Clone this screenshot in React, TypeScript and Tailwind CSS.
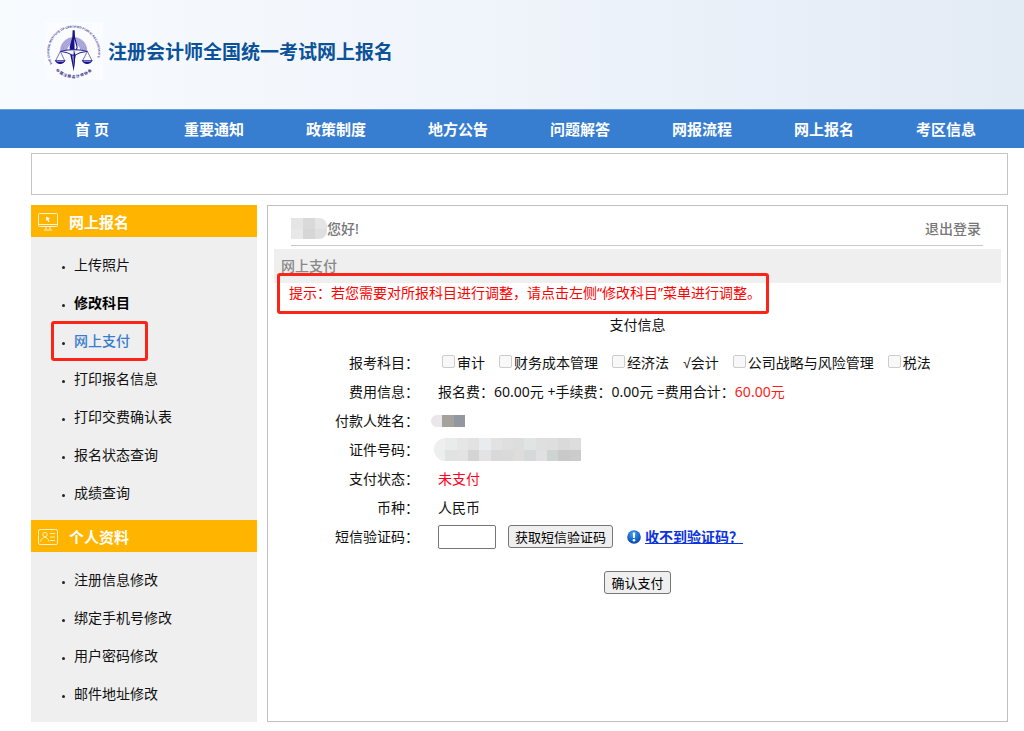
import React from "react";

const navItems = ["首 页", "重要通知", "政策制度", "地方公告", "问题解答", "网报流程", "网上报名", "考区信息"];

type MenuItem = { label: string; bold?: boolean; active?: boolean };

const registrationMenu: MenuItem[] = [
  { label: "上传照片" },
  { label: "修改科目", bold: true },
  { label: "网上支付", active: true },
  { label: "打印报名信息" },
  { label: "打印交费确认表" },
  { label: "报名状态查询" },
  { label: "成绩查询" },
];

const profileMenu: MenuItem[] = [
  { label: "注册信息修改" },
  { label: "绑定手机号修改" },
  { label: "用户密码修改" },
  { label: "邮件地址修改" },
];

const subjects = [
  { name: "审计", chosen: false },
  { name: "财务成本管理", chosen: false },
  { name: "经济法", chosen: false },
  { name: "会计", chosen: true },
  { name: "公司战略与风险管理", chosen: false },
  { name: "税法", chosen: false },
];

const idBlocks = [
  "bg-[#efefef]", "bg-[#eaecec]", "bg-[#e6e6e6]", "bg-[#e3e2e3]", "bg-[#e9ecee]", "bg-[#e2e2e3]", "bg-[#dfdfe0]",
  "bg-[#dddddd]", "bg-[#e0e4e3]", "bg-[#dfdfdf]", "bg-[#dedede]", "bg-[#dbdadb]", "bg-[#dddddd]",
  "bg-[#eeeeee]", "bg-[#dfe3e2]", "bg-[#e3e3e3]", "bg-[#d4d4d5]", "bg-[#e3e3e3]", "bg-[#d9d9da]", "bg-[#dadada]",
  "bg-[#dfdddc]", "bg-[#d5d9da]", "bg-[#e0e0e0]", "bg-[#cfd3d2]", "bg-[#c9c9ca]", "bg-[#cbcbcb]",
];

function Logo() {
  return (
    <svg viewBox="0 0 174 174" className="size-[58px] bg-[#fbfcff]" fill="none" aria-hidden="true">
      <defs>
        <path id="ring-top" d="M22.5 126 A73 73 0 1 1 149.5 126" />
        <path id="ring-bottom" d="M22 134 A78 78 0 0 0 150 134" />
      </defs>
      <text fill="#3b3494" fontFamily="Liberation Sans, sans-serif" fontSize="9" fontWeight="700">
        <textPath href="#ring-top">THE CHINESE INSTITUTE OF CERTIFIED PUBLIC ACCOUNTANTS</textPath>
      </text>
      <text fill="#2b2488" fontFamily="Noto Sans CJK SC, sans-serif" fontSize="11" fontWeight="700" textAnchor="middle">
        <textPath href="#ring-bottom" startOffset="50%">中 国 注 册 会 计 师 协 会</textPath>
      </text>
      <path d="M45 86 A41 41 0 0 1 127 86 H106 A20 20 0 0 0 66 86 Z" fill="#b9b5df" />
      <g stroke="#827cc4" strokeWidth="1.5">
        <path d="M49 86 A37 37 0 0 1 123 86" />
        <path d="M54 86 A32 32 0 0 1 118 86" />
        <path d="M59 86 A27 27 0 0 1 113 86" />
        <path d="M64 86 A22 22 0 0 1 108 86" />
      </g>
      <path d="M83 25 H89 L90 44 L98 76 L92 97 L86 148 L76 98 L74 76 L82 44 Z" fill="#17128a" />
      <path d="M88 50 L95 76 L89 92 Z M82 100 L86 100 L86 133 Z" fill="#f4f5ff" />
      <path d="M46 88 Q86 78 127 88 Q101 91 91 99 H81 Q70 91 46 88 Z" fill="#f4f5ff" stroke="#2b258f" strokeWidth="3" />
      <path d="M86 80 L91 98 L86 148 Z" fill="#17128a" />
      <path d="M46 88 L32 116 M46 88 L59 116 M127 88 L113 116 M127 88 L141 116" stroke="#332d93" strokeWidth="2" />
      <path d="M29 115 H62 Q57 126 45 126 Q34 126 29 115 Z M110 115 H143 Q138 126 126 126 Q115 126 110 115 Z" fill="#17128a" />
      <path d="M35 118 H56 M116 118 H137" stroke="#d4d2ee" strokeWidth="2" />
    </svg>
  );
}

function MonitorIcon() {
  return (
    <svg viewBox="0 0 20 18" className="h-[18px] w-5" fill="none" stroke="#fff4cf" aria-hidden="true">
      <rect x="0.5" y="0.5" width="19" height="13" rx="1" />
      <path d="M1 11.5 H19 M8 14 V16.5 M12 14 V16.5 M6 17 H14" />
      <path d="M8 3.5 L12 5.5 L10.5 6.2 L11.5 8.5 L10.3 9 L9.4 7 L8.3 8 Z" fill="#fff" stroke="none" />
    </svg>
  );
}

function IdCardIcon() {
  return (
    <svg viewBox="0 0 20 16" className="h-4 w-5" fill="none" stroke="#fff0bd" aria-hidden="true">
      <rect x="0.5" y="0.5" width="19" height="15" rx="1.5" />
      <circle cx="7" cy="5.5" r="2.2" />
      <path d="M2.5 12.5 C3.5 9.5 5 8.5 7 8.5 S10 9.5 11 12.5 M12 4.5 H17 M12 8 H17 M12 11.5 H17" />
    </svg>
  );
}

function NoticeIcon() {
  return (
    <svg viewBox="0 0 14 14" className="size-[14px]" aria-hidden="true">
      <defs>
        <radialGradient id="notice" cx="0.45" cy="0.3" r="0.75">
          <stop offset="0" stopColor="#4aa0f4" />
          <stop offset="0.6" stopColor="#1565cf" />
          <stop offset="1" stopColor="#0a3e94" />
        </radialGradient>
      </defs>
      <circle cx="7" cy="7" r="6.8" fill="url(#notice)" />
      <path d="M5.8 2.5 H8.2 L7.9 8 H6.1 Z" fill="#fff" />
      <circle cx="7" cy="10.2" r="1.3" fill="#fff" />
    </svg>
  );
}

function MenuSection({ title, icon, items }: { title: string; icon: React.ReactNode; items: MenuItem[] }) {
  return (
    <section>
      <h2 className="flex h-8 items-center gap-[11px] bg-[#ffb400] pt-px pl-[7px] text-[15px] font-bold text-white">
        {icon}
        {title}
      </h2>
      <ul className="pt-[9px] pb-2">
        {items.map((item) => (
          <li key={item.label} className="relative flex h-[38px] items-center gap-[9px] pl-[31px]">
            <span className="mt-1 size-[3px] rounded-full bg-[#222]" />
            <a
              href="#"
              className={item.bold ? "font-bold text-black" : item.active ? "font-medium text-[#377dd0]" : "text-[#111]"}
            >
              {item.label}
            </a>
            {item.active && (
              <span className="pointer-events-none absolute -inset-y-px left-5 w-[97px] rounded-[3px] border-[3px] border-[#fb2418]" />
            )}
          </li>
        ))}
      </ul>
    </section>
  );
}

function Row({ label, htmlFor, children }: { label: string; htmlFor?: string; children: React.ReactNode }) {
  return (
    <div className="grid min-h-[29px] grid-cols-[151px_1fr] items-center gap-3">
      {htmlFor ? (
        <label htmlFor={htmlFor} className="text-right">{label}：</label>
      ) : (
        <span className="text-right">{label}：</span>
      )}
      <div className="flex items-center">{children}</div>
    </div>
  );
}

export default function App() {
  return (
    <div className="min-h-screen bg-white pb-[9px] font-['Noto_Sans','Noto_Sans_CJK_SC',sans-serif] text-[14px] leading-5 text-[#111]">
      <header className="flex h-[109px] items-center gap-[5px] bg-linear-to-r from-[#f8fbfe] via-[#eff4fb] to-[#e3ebf5] pb-[7px] pl-[45px]">
        <Logo />
        <h1 className="pt-[2px] text-[19px] leading-7 font-bold text-[#0b5299]">注册会计师全国统一考试网上报名</h1>
      </header>

      <nav className="border-t border-[#6a9fd9] bg-[#377dd0] pr-[17px] pl-[31px]">
        <ul className="grid h-[38px] grid-cols-8 items-center text-center text-[15px] font-bold text-white">
          {navItems.map((item) => (
            <li key={item}>
              <a href="#">{item}</a>
            </li>
          ))}
        </ul>
      </nav>

      <div className="flex flex-col gap-[10px] pt-[5px] pr-4 pl-[31px]">
        <div className="h-[42px] border border-[#c4c4c4]" />

        <div className="flex gap-[10px]">
          <aside className="w-[226px] shrink-0 bg-[#efefef] pb-px">
            <MenuSection title="网上报名" icon={<MonitorIcon />} items={registrationMenu} />
            <MenuSection title="个人资料" icon={<IdCardIcon />} items={profileMenu} />
          </aside>

          <main className="min-w-0 flex-1 border border-[#c0c0c0]">
            <div className="mr-6 ml-[23px] flex h-10 items-center justify-between border-b border-[#c8c8c8] pt-[6px] pr-[2px] font-medium text-[#777]">
              <div className="flex items-center">
                <span className="grid h-[21px] w-9 grid-cols-3 overflow-hidden rounded-r-lg">
                  <span className="bg-[#e6e5e5]" />
                  <span className="bg-[#d9d9d9]" />
                  <span className="bg-[#e5e5e6]" />
                  <span className="bg-[#e9e8e8]" />
                  <span className="bg-[#d6d6d7]" />
                  <span className="bg-[#dfdfe0]" />
                </span>
                您好!
              </div>
              <a href="#">退出登录</a>
            </div>

            <h2 className="mx-[6px] mt-[3px] flex h-[34px] items-center bg-[#efefef] pl-[7px] font-medium text-[#888]">网上支付</h2>

            <p className="relative ml-[21px] w-fit text-[#ff0000]">
              提示：若您需要对所报科目进行调整，请点击左侧“修改科目”菜单进行调整。
              <span className="pointer-events-none absolute -top-[10px] -right-2 -bottom-[11px] -left-3 rounded-[3px] border-[3px] border-[#fb2418]" />
            </p>

            <h3 className="flex h-11 items-center justify-center">支付信息</h3>

            <form className="pt-px" onSubmit={(event) => event.preventDefault()}>
              <Row label="报考科目">
                <div className="flex flex-wrap gap-x-[14px] pl-[11px]">
                  {subjects.map((subject) =>
                    subject.chosen ? (
                      <span key={subject.name} className="font-['Liberation_Sans','Noto_Sans_CJK_SC',sans-serif]">√{subject.name}</span>
                    ) : (
                      <label key={subject.name} className="flex items-center gap-[2px]">
                        <input
                          type="checkbox"
                          disabled
                          className="mb-[2px] size-[13px] appearance-none rounded-[2px] border border-[#ccc] bg-[#f8f8f8]"
                        />
                        {subject.name}
                      </label>
                    ),
                  )}
                </div>
              </Row>
              <Row label="费用信息">
                <p className="pl-[7px]">
                  报名费：60.00元 +手续费：0.00元 =费用合计：<span className="text-[#ff1a1a]">60.00元</span>
                </p>
              </Row>
              <Row label="付款人姓名">
                <span className="grid h-3 w-[34px] grid-cols-3 overflow-hidden rounded-l-md">
                  <span className="bg-[#ebe6e9]" />
                  <span className="bg-[#a3a29c]" />
                  <span className="bg-[#9297a0]" />
                </span>
              </Row>
              <Row label="证件号码">
                <span className="ml-[3px] grid h-[23px] w-[147px] grid-cols-13 overflow-hidden rounded-l-xl">
                  {idBlocks.map((color, index) => (
                    <span key={index} className={color} />
                  ))}
                </span>
              </Row>
              <Row label="支付状态">
                <span className="pl-[7px] text-[#ff0022]">未支付</span>
              </Row>
              <Row label="币种">
                <span className="pl-[7px]">人民币</span>
              </Row>
              <Row label="短信验证码" htmlFor="sms-code">
                <input id="sms-code" type="text" className="ml-[7px] h-6 w-[58px] rounded-[2px] border border-[#767676] bg-white px-1" />
                <button type="button" className="ml-3 h-[23px] rounded-[3px] border border-[#767676] bg-[#efefef] px-[6px] text-[13px] text-black">
                  获取短信验证码
                </button>
                <span className="ml-[14px] flex items-center gap-1">
                  <NoticeIcon />
                  <a href="#" className="font-bold text-[#0b33e0] underline">收不到验证码？</a>
                </span>
              </Row>
              <div className="mt-5 flex justify-center">
                <button type="submit" className="h-[23px] rounded-[3px] border border-[#767676] bg-[#efefef] px-[6px] text-[13px] text-black">
                  确认支付
                </button>
              </div>
            </form>
          </main>
        </div>
      </div>
    </div>
  );
}
